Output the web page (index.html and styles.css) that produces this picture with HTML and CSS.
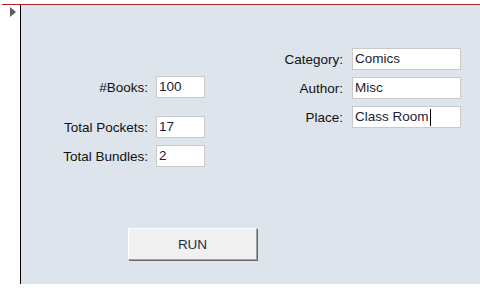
FILE: index.html
```html
<!DOCTYPE html>
<html lang="en">
<head>
  <meta charset="UTF-8">
  <title>Books Form</title>
  <link rel="stylesheet" href="styles.css">
</head>
<body>

<div class="frame">
  <div class="selector">
    <span class="current"></span>
  </div>

  <div class="detail">
    <div class="fields">
      <div class="group left">
        <div class="row spaced">
          <span class="label">#Books:</span>
          <div class="box">100</div>
        </div>
        <div class="row">
          <span class="label">Total Pockets:</span>
          <div class="box">17</div>
        </div>
        <div class="row">
          <span class="label">Total Bundles:</span>
          <div class="box">2</div>
        </div>
      </div>

      <div class="group right">
        <div class="row">
          <span class="label">Category:</span>
          <div class="box">Comics</div>
        </div>
        <div class="row">
          <span class="label">Author:</span>
          <div class="box">Misc</div>
        </div>
        <div class="row">
          <span class="label">Place:</span>
          <div class="box">Class Room<span class="caret"></span></div>
        </div>
      </div>
    </div>

    <div class="actions">
      <button class="run">RUN</button>
    </div>
  </div>
</div>

</body>
</html>
```

FILE: styles.css
```css
body {
  margin: 0;
  background: #fff;
  font-family: "Liberation Sans", Arial, sans-serif;
  font-size: 13.5px;
  color: #111;
}

.frame {
  display: flex;
  height: 279px;
  margin: 4px 0 0 2px;
  border-top: 1px solid #b3262e;
}

.selector {
  width: 18px;
}

.current {
  display: block;
  width: 0;
  height: 0;
  margin: 2px 0 0 8px;
  border-left: 6px solid #5c5c5c;
  border-top: 5px solid transparent;
  border-bottom: 5px solid transparent;
}

.detail {
  flex: 1;
  border-left: 1px solid #000;
  background: #dde4ec;
}

.fields {
  display: flex;
  align-items: flex-start;
}

.row {
  display: flex;
  align-items: center;
  gap: 8px;
  margin-bottom: 7px;
}

.row.spaced {
  margin-bottom: 18px;
}

.label {
  text-align: right;
}

.box {
  height: 20px;
  line-height: 20px;
  padding-left: 2px;
  background: #fff;
  border: 1px solid #c9c9c9;
  color: #1b1b3a;
  white-space: nowrap;
}

.left {
  margin-top: 71px;
}

.left .label {
  width: 127px;
}

.left .box {
  width: 45px;
}

.right {
  margin-top: 43px;
  margin-left: 38px;
}

.right .label {
  width: 100px;
}

.right .row {
  gap: 9px;
}

.right .box {
  width: 105px;
}

.caret {
  display: inline-block;
  width: 1px;
  height: 17px;
  margin-left: 1px;
  background: #000;
  vertical-align: middle;
}

.actions {
  margin-top: 54px;
  padding-left: 107px;
}

.run {
  width: 129px;
  height: 32px;
  background: #f0f0f0;
  border: 1px solid;
  border-color: #fff #a0a0a0 #a0a0a0 #fff;
  box-shadow: 1px 1px 0 #696969;
  font-family: "Liberation Sans", Arial, sans-serif;
  font-size: 13.5px;
  color: #1d2e4a;
  cursor: pointer;
}
```
